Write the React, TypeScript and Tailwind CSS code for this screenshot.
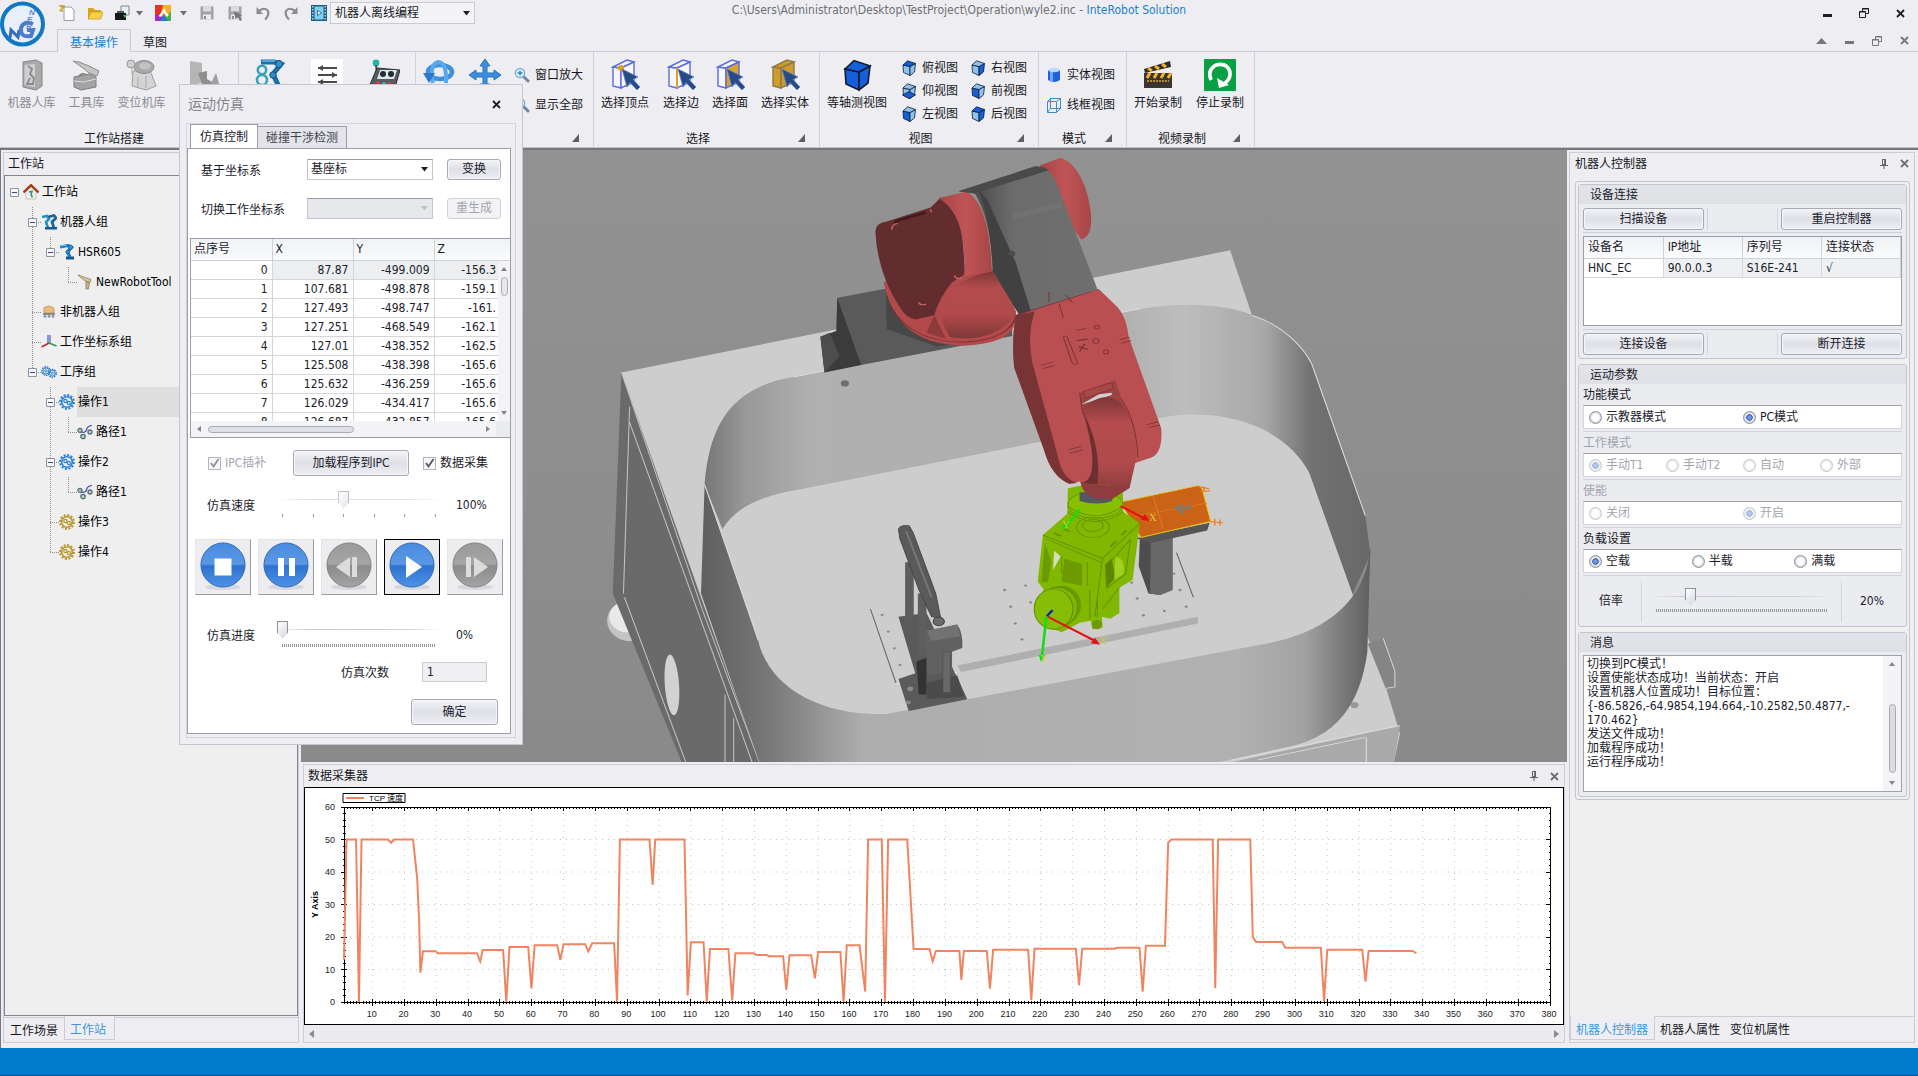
//--------------------------------------------------------------------//
// Imports

//modules
import type { ReactNode } from 'react';
import clsx from 'clsx';

//--------------------------------------------------------------------//
// Types

type TreeNode = {
  level: number,
  label: string,
  icon: ReactNode,
  open?: boolean,
  active?: boolean,
  //for each level from 1 on: whether the guide runs on below this row
  guides: boolean[]
};

//--------------------------------------------------------------------//
// Constants

const points = [
  [ '0', '87.87', '-499.009', '-156.3' ],
  [ '1', '107.681', '-498.878', '-159.1' ],
  [ '2', '127.493', '-498.747', '-161.' ],
  [ '3', '127.251', '-468.549', '-162.1' ],
  [ '4', '127.01', '-438.352', '-162.5' ],
  [ '5', '125.508', '-438.398', '-165.6' ],
  [ '6', '125.632', '-436.259', '-165.6' ],
  [ '7', '126.029', '-434.417', '-165.6' ],
  [ '8', '126.687', '-432.857', '-165.6' ]
];

const messages = [
  '切换到PC模式！',
  '设置使能状态成功！当前状态：开启',
  '设置机器人位置成功！目标位置：',
  '{-86.5826,-64.9854,194.664,-10.2582,50.4877,-',
  '170.462}',
  '发送文件成功！',
  '加载程序成功！',
  '运行程序成功！'
].join('\n');

//TCP speed samples
const samples = [
  [1,13],[1.8,50],[4.8,50],[5.7,0],[6.5,50],[14.8,50],[15.8,49],[16.8,50],
  [22.7,50],[24,38],[24.6,25],[25,9],[25.8,15.6],[29.8,15.6],[30.5,15],
  [42.8,15],[43.8,12.5],[44.6,16],[51,16],[52,0],[53,16.9],[58.9,16.9],
  [59.9,4.2],[60.9,17.5],[68,17.5],[69,13],[70,17.8],[76.8,17.8],[77.8,15.6],
  [79,18.1],[85.9,18.1],[86.8,0],[87.7,50],[97,50],[98,36],[98.8,50],
  [108,50],[109,2],[110,18.4],[114,18.4],[115,0],[116,16.3],[121.8,16.3],
  [123,0.5],[124,15],[129.8,15],[130.5,14.5],[133.8,14.5],[134.5,14.1],
  [139,14.1],[140,3.7],[141,14.4],[147.8,14.4],[149,7.3],[150,15.4],
  [157,15.4],[158,0],[159,17.5],[163,17.5],[164.8,3.2],[165.7,50],[170,50],
  [171,0],[172,50],[178,50],[180,16.3],[185,16.3],[186,12.5],[187,15.7],
  [194.4,15.7],[195,6.8],[195.8,15.7],[203,15.7],[204,4.1],[205,16.1],
  [216,16.1],[217,0.6],[218,16.4],[231,16.4],[232,5.2],[233,16.4],
  [243,16.4],[244,16.7],[251,16.7],[252,3.2],[253,17.3],[259,17.3],[260,49],
  [261,50],[274,50],[274.8,4.2],[275.7,50],[285.8,50],[286.6,20],
  [287.6,18.5],[295.8,18.5],[296.8,16.7],[308,16.7],[309,0.2],[310,16.1],
  [321,16.1],[322,6.3],[323,15.7],[336.8,15.7],[338,15]
];

const buttonStyle = 'border border-[#a6a9b4] rounded-[3px] bg-linear-to-b '
  + 'from-[#f3f4f7] via-[#dfe0e7] to-[#eeeff3] text-[#1b1b2b] '
  + 'shadow-[inset_0_0_0_1px_#f6f6fa]';

const trackStyle = 'block w-full h-5 appearance-none bg-transparent '
  + 'bg-[linear-gradient(90deg,transparent,#c9c4d8_20%,#cfd1d8_80%,transparent)] '
  + 'bg-[length:100%_1px] bg-[position:0_9px] bg-no-repeat '
  + '[&::-webkit-slider-thumb]:appearance-none '
  + '[&::-webkit-slider-thumb]:w-[11px] [&::-webkit-slider-thumb]:h-[18px] '
  + '[&::-webkit-slider-thumb]:bg-[linear-gradient(135deg,#ffffff,#d4d6dd)] '
  + '[&::-webkit-slider-thumb]:border [&::-webkit-slider-thumb]:border-[#8f929c] '
  + '[&::-webkit-slider-thumb]:[clip-path:polygon(0_0,100%_0,100%_68%,50%_100%,0_68%)]';

//--------------------------------------------------------------------//
// Icons

function Arm() {
  return (
    <svg width="16" height="16" viewBox="0 0 16 16">
      <path d="M1 3 L9 1.5 L12.5 3.5 L8.5 8 L11 13" fill="none" stroke="#1f7bc2" strokeWidth="3.2" />
      <path d="M1 2 L8 1" stroke="#8fd0f5" strokeWidth="0.8" />
      <path d="M7 12.5 h8 v3 h-8z" fill="#17598f" />
      <circle cx="11.5" cy="3.2" r="2.2" fill="#2b93d8" stroke="#114a78" strokeWidth="0.6" />
      <circle cx="8.8" cy="8" r="1.9" fill="#2b93d8" stroke="#114a78" strokeWidth="0.6" />
    </svg>
  );
};

function ArmPair() {
  return (
    <svg width="16" height="16" viewBox="0 0 16 16">
      <path d="M1 3 L6 2 L8 5 L5 8 L7 14" fill="none" stroke="#2b8fc9" strokeWidth="2.6" />
      <path d="M7 3 L13 1.5 L15 4 L11 8 L13 14" fill="none" stroke="#1b649c" strokeWidth="2.8" />
      <path d="M4 13 h12 v2.5 h-12z" fill="#17598f" />
    </svg>
  );
};

function Gear({ color = '#2a7fd6' }) {
  return (
    <svg width="16" height="16" viewBox="0 0 16 16" fill="none">
      <circle cx="8" cy="8" r="6.9" stroke={color} strokeWidth="2" strokeDasharray="2.1 1.51" />
      <circle cx="8" cy="8" r="5.3" stroke={color} strokeWidth="1.6" />
      <circle cx="6.4" cy="7" r="1.6" stroke={color} strokeWidth="1.2" />
      <circle cx="9.8" cy="9" r="1.6" stroke={color} strokeWidth="1.2" />
    </svg>
  );
};

function Gears() {
  return (
    <svg width="16" height="16" viewBox="0 0 16 16" fill="none" stroke="#2f83cf">
      <circle cx="5" cy="7" r="4.2" strokeWidth="1.4" strokeDasharray="1.7 0.8" />
      <circle cx="5" cy="7" r="3.1" />
      <circle cx="5" cy="7" r="1.2" />
      <circle cx="11.3" cy="9.3" r="3.9" strokeWidth="1.4" strokeDasharray="1.7 0.8" />
      <circle cx="11.3" cy="9.3" r="2.8" />
      <circle cx="11.3" cy="9.3" r="1" />
    </svg>
  );
};

function House() {
  return (
    <svg width="16" height="16" viewBox="0 0 16 16">
      <path d="M3 8 v7 h10 v-7 l-5 -5z" fill="#f3efe6" stroke="#b7aa90" strokeWidth="0.6" />
      <path d="M0.5 8.5 L8 1.2 L15.5 8.5" fill="none" stroke="#a63c1e" strokeWidth="2.4" />
      <path d="M6 8 l3 -0.6 l-1 3 l1.4 3" fill="none" stroke="#2f8f9d" strokeWidth="1.6" />
    </svg>
  );
};

function ToolGun() {
  return (
    <svg width="16" height="16" viewBox="0 0 16 16">
      <path d="M1 1 L14 5.5 L13 8.5 L8 7z" fill="#d9c49b" stroke="#86714a" strokeWidth="0.7" />
      <path d="M9 7.5 L12.5 8.5 L11.5 15 L9 15z" fill="#c8b184" stroke="#86714a" strokeWidth="0.7" />
    </svg>
  );
};

function Crate() {
  return (
    <svg width="16" height="16" viewBox="0 0 16 16">
      <path d="M3 9 V3.5 L8 2 L13 4 V9z" fill="#e9bd7a" stroke="#b98b45" strokeWidth="0.7" />
      <path d="M2 10 h12" stroke="#6f7782" strokeWidth="1.6" />
      <circle cx="4" cy="12.4" r="1.4" fill="#8b95a3" />
      <circle cx="8" cy="12.4" r="1.4" fill="#8b95a3" />
      <circle cx="12" cy="12.4" r="1.4" fill="#8b95a3" />
    </svg>
  );
};

function Axes() {
  return (
    <svg width="16" height="16" viewBox="0 0 16 16" fill="none" strokeWidth="1.7">
      <path d="M7 1 V9 M9 1 V9" stroke="#4658cf" strokeWidth="1.2" />
      <path d="M8 9 L0.5 13" stroke="#c92a2a" />
      <path d="M8 9 L15.5 12" stroke="#2f9e44" />
    </svg>
  );
};

function Route() {
  return (
    <svg width="16" height="16" viewBox="0 0 16 16" fill="none">
      <path d="M15 1.5 Q10 2 9.5 6 Q8 10 3 7" stroke="#3b46b0" strokeWidth="1.2" />
      <g stroke="#56707c" strokeWidth="1.3" fill="#b9d3bf">
        <circle cx="3" cy="6.5" r="2" />
        <circle cx="6" cy="12.5" r="2.2" />
        <circle cx="13" cy="8" r="2" />
      </g>
    </svg>
  );
};

/**
 * Open box with a pointer. The fill says what a click selects
 */
function PickBox({ mode }: { mode: 'point' | 'edge' | 'face' | 'solid' }) {
  const solid = mode === 'solid';
  return (
    <svg width="32" height="32" viewBox="0 0 32 32">
      <g fill={solid ? '#d19b2b' : '#f7f7fd'} stroke={solid ? '#8f7a4a' : '#5a6be0'} strokeWidth="1.4">
        <path d="M4 8 L12 9 V29 L4 27z" />
        <path d="M4 8 L18 1 L25 3 L12 9z" />
        <path d="M12 9 L25 3 V23 L12 29z" fill={mode === 'face' ? '#d9a32f' : undefined} />
      </g>
      {mode === 'edge' && <path d="M12 9 V29" stroke="#e0a020" strokeWidth="2" />}
      {mode === 'point' && <circle cx="12" cy="9" r="3" fill="#e0a020" />}
      <path
        d="M13 10 L29 18 L24 20.5 L31 28 L28 31 L21 23.5 L18 28z"
        fill="#274a86"
        stroke="#5f84bf"
        strokeWidth="0.8"
      />
    </svg>
  );
};

/**
 * View cube. The face that is looked at is dark
 */
function Cube({ face = '', size = 16 }) {
  const dark = '#1560d8';
  const light = size > 16 ? dark : '#8fc4ea';
  const left = face === 'front' || face === 'left';
  const right = face === 'right' || face === 'back';
  const top = face === 'top' || face === 'back';
  return (
    <svg width={size} height={size} viewBox="0 0 16 16" stroke="#0d1b33" strokeWidth="0.8">
      <path d="M2 5 L9 6.5 V15.5 L2.5 12.5z" fill={left ? dark : light} />
      <path d="M9 6.5 L14.5 3.5 L13.5 12 L9 15.5z" fill={right ? dark : light} />
      <path d="M2 5 L6.5 0.8 L14.5 3.5 L9 6.5z" fill={top ? dark : light} />
      {face === 'bottom' && <path d="M1.5 12 L8 8.5 L14.5 12 L8 15.5z" fill={dark} />}
    </svg>
  );
};

function Magnifier() {
  return (
    <svg width="16" height="16" viewBox="0 0 16 16" fill="none">
      <path d="M9.5 9.5 L14 14" stroke="#6f8aa0" strokeWidth="3" strokeLinecap="round" />
      <circle cx="6" cy="6" r="4.6" fill="#e4f4fd" stroke="#7bb3d4" strokeWidth="1.5" />
      <path d="M6 3.5 V8.5 M3.5 6 H8.5" stroke="#2583c7" strokeWidth="1.4" />
    </svg>
  );
};

function Floppy({ pointer = false }) {
  return (
    <svg width="16" height="16" viewBox="0 0 16 16">
      <path d="M1.5 1.5 h13 v13 h-13z" fill="#a3a3a6" />
      <path d="M4 1.5 h8 v5 h-8z" fill="#dcdcdf" />
      <path d="M4 9.5 h8 v5 h-8z" fill="#ececef" />
      <path d="M5 11 h2 v3 h-2z" fill="#8a8a8d" />
      {pointer && <path d="M7 6 L15 10.5 L12.5 11.5 L15 15 L13 16 L11 12.5 L8.5 14z" fill="#77777b" />}
    </svg>
  );
};

function Turn({ flip = false }) {
  return (
    <svg width="16" height="16" viewBox="0 0 16 16" className={clsx(flip && '-scale-x-100')}>
      <path d="M4 6 Q10 1.5 13 6 Q14.5 10 10 14.5" fill="none" stroke="#8b8b90" strokeWidth="2.2" />
      <path d="M1.5 2 V9 H8z" fill="#8b8b90" />
    </svg>
  );
};

function Caret({ className = 'fill-[#1e1e1e]' }) {
  return (
    <svg width="7" height="5" viewBox="0 0 7 5" className={className}>
      <path d="M0 0 h7 l-3.5 4.5z" />
    </svg>
  );
};

function Close({ className = 'stroke-[#1e1e1e]' }) {
  return (
    <svg width="9" height="9" viewBox="0 0 9 9" className={className}>
      <path d="M1 1 L8 8 M8 1 L1 8" strokeWidth="1.8" />
    </svg>
  );
};

function Restore() {
  return (
    <svg width="10" height="10" viewBox="0 0 10 10" fill="none" stroke="currentColor">
      <path d="M0.5 3.5 h6 v6 h-6z M0 4 h7" />
      <path d="M3.5 3 V0.5 h6 v5 H7 M3 1 h7" />
    </svg>
  );
};

function Pin() {
  return (
    <svg width="8" height="10" viewBox="0 0 8 10" fill="none" stroke="#5e5e66">
      <path d="M2.5 0.5 h3 v5 h-3z M0 6.5 h8 M4 6 v4" />
      <path d="M5 0.5 v5" strokeWidth="1.6" />
    </svg>
  );
};

function Logo() {
  return (
    <svg width="46" height="48" viewBox="0 0 46 48" className="absolute left-0 top-0">
      <circle cx="22.5" cy="24" r="20.5" fill="#e9effa" stroke="#1079c4" strokeWidth="4" />
      <path d="M10 38 L11 30 L18 37 L19 30" fill="none" stroke="#3567bd" strokeWidth="3" />
      <path d="M33 24 Q24 20 21 28 Q20 38 31 36 L33 30 H27" fill="none" stroke="#4c7ccd" strokeWidth="4" />
      <g fill="#5b84cc" fontFamily="Liberation Sans, sans-serif" fontWeight="bold" fontStyle="italic" fontSize="8">
        <text x="29" y="15">N</text>
        <text x="27" y="22">E</text>
        <text x="26" y="29">R</text>
      </g>
    </svg>
  );
};

//--------------------------------------------------------------------//
// Header Components

function BigButton(props: {
  icon: ReactNode,
  width: string,
  label?: string,
  title?: string,
  muted?: boolean
}) {
  const { icon, width, label, title, muted } = props;
  return (
    <button
      type="button"
      aria-label={label || title}
      className={clsx(
        'flex flex-col items-center pt-[7px] whitespace-nowrap',
        width,
        muted ? 'text-[#8b8b92]' : 'text-[#16161c]'
      )}
    >
      <span className="h-8">{icon}</span>
      {label && <span className="mt-1 leading-4">{label}</span>}
    </button>
  );
};

function SmallButton({ icon, label }: { icon: ReactNode, label: string }) {
  return (
    <button type="button" className="flex items-center gap-[5px] whitespace-nowrap text-[#16161c]">
      {icon}
      {label}
    </button>
  );
};

function RibbonGroup(props: {
  width: string,
  label?: string,
  launcher?: boolean,
  children: ReactNode
}) {
  const { width, label, launcher, children } = props;
  return (
    <section className={clsx('flex flex-col shrink-0 border-r border-[#d0d1dc]', width)}>
      <div className="flex flex-1">{children}</div>
      <div className="flex items-center h-[18px] pl-1 pr-[14px]">
        <span className="flex-1 pt-0.5 text-center text-[#16161c]">{label}</span>
        {launcher && (
          <svg width="7" height="8" viewBox="0 0 7 8" className="fill-[#5e5e64]">
            <path d="M7 0 V8 H0z" />
          </svg>
        )}
      </div>
    </section>
  );
};

function TitleBar() {
  return (
    <header className="relative">
      <Logo />
      <div className="grid grid-cols-[1fr_auto_1fr] h-[26px] items-center">
        <div className="flex items-center gap-3 pl-[59px]">
          <button type="button" aria-label="新建">
            <svg width="16" height="16" viewBox="0 0 16 16">
              <path d="M5 2 h7 l3 3 v10.5 h-10z" fill="#fdfdff" stroke="#9a9aa8" />
              <path d="M0 1 h6 M3 0 v7 M0.5 6 L6 1" stroke="#c6a524" strokeWidth="1.5" />
            </svg>
          </button>
          <button type="button" aria-label="打开">
            <svg width="16" height="16" viewBox="0 0 16 16">
              <path d="M1 14 V3 h5 l2 2 h6 v9z" fill="#d9a31c" />
              <path d="M1 14 L4 7 H16 L13.5 14z" fill="#f8d14c" stroke="#c99516" strokeWidth="0.7" />
            </svg>
          </button>
          <button type="button" aria-label="导入" className="flex w-7 items-center justify-between">
            <svg width="16" height="16" viewBox="0 0 16 16">
              <path d="M6 1 h8 v9 h-8z" fill="#e6eef5" stroke="#7b8792" />
              <path d="M0 8 h11 v7 h-11z" fill="#17191c" />
              <path d="M2 6 h7 v2 h-7z" fill="#4d545b" />
              <path d="M8 10 l4 0 l-2 3z" fill="#46b33f" />
            </svg>
            <Caret className="fill-[#6e6e74]" />
          </button>
          <button type="button" aria-label="颜色" className="flex w-8 items-center justify-between">
            <svg width="16" height="16" viewBox="0 0 16 16">
              <path d="M0 0 h16 v16 h-16z" fill="#f6b12a" />
              <path d="M0 0 h8 L4 16 H0z" fill="#e8322c" />
              <path d="M16 6 V16 H9z" fill="#3bb54a" />
              <path d="M0 9 L8 12 L6 16 H0z" fill="#a628c9" />
              <path d="M5 16 L9 9 L13 16z" fill="#2276e0" />
              <path d="M4.5 11.5 L10 4 M8 5 L13 11" fill="none" stroke="#fff" strokeWidth="2" />
            </svg>
            <Caret className="fill-[#6e6e74]" />
          </button>
          <button type="button" aria-label="保存"><Floppy /></button>
          <button type="button" aria-label="另存为"><Floppy pointer /></button>
          <button type="button" aria-label="撤销"><Turn /></button>
          <button type="button" aria-label="重做"><Turn flip /></button>
          <div className="flex items-center gap-[3px]">
            <svg width="16" height="16" viewBox="0 0 16 16">
              <path d="M0 0 h16 v16 h-16z" fill="#1c5d86" />
              <path d="M3.5 1.5 h9 v13 h-9z" fill="#7fd0f0" />
              <path d="M1.8 1 V16 M14.2 1 V16" stroke="#d8eef8" strokeWidth="1.2" strokeDasharray="1.5 1.5" />
              <path d="M6.5 5.5 l4 2.5 l-4 2.5z" fill="#fff" stroke="#1c5d86" strokeWidth="0.8" />
            </svg>
            <div className="relative">
              <select
                aria-label="模块"
                className={
                  'appearance-none w-[145px] h-[22px] pl-1 border border-[#c9cad4] '
                  + 'bg-[#f4f4f7] text-[#16161c]'
                }
              >
                <option>机器人离线编程</option>
              </select>
              <span className="absolute right-[5px] top-[9px] pointer-events-none"><Caret /></span>
            </div>
          </div>
        </div>
        <h1 className="self-start pt-0.5 leading-4 text-[#6f6f75]">
          C:\Users\Administrator\Desktop\TestProject\Operation\wyle2.inc
          {' - '}
          <span className="text-[#1d7fc7]">InteRobot Solution</span>
        </h1>
        <div className="flex items-center justify-end pr-[13px] gap-[27px] text-[#1e1e1e]">
          <button type="button" aria-label="最小化" className="w-[9px] h-[3px] bg-[#1e1e1e] mt-1"></button>
          <button type="button" aria-label="还原"><Restore /></button>
          <button type="button" aria-label="关闭"><Close /></button>
        </div>
      </div>
      <div className="flex h-[26px] border-b border-[#c9cad6] pl-[57px]">
        <a
          href="#basic"
          className={
            'mt-[3px] h-[23px] w-[74px] pt-[3px] text-center leading-5 border '
            + 'border-b-0 border-[#c9cad6] bg-[#eeeef2] text-[#1d7fc7]'
          }
        >
          基本操作
        </a>
        <a href="#sketch" className="mt-[3px] pt-1 px-3 leading-5 text-[#16161c]">草图</a>
        <div className="flex-1"></div>
        <div className="flex items-center gap-[18px] pr-[9px] pt-1 text-[#76767c]">
          <button type="button" aria-label="收起">
            <svg width="11" height="6" viewBox="0 0 11 6" className="fill-[#76767c]">
              <path d="M0 6 L5.5 0 L11 6z" />
            </svg>
          </button>
          <button type="button" aria-label="最小化窗口" className="w-[9px] h-[3px] bg-[#76767c] mt-1"></button>
          <button type="button" aria-label="还原窗口"><Restore /></button>
          <button type="button" aria-label="关闭窗口"><Close className="stroke-[#76767c]" /></button>
        </div>
      </div>
    </header>
  );
};

function Ribbon() {
  return (
    <nav className="flex h-24 border-b border-[#c3c4cc]">
      <RibbonGroup width="w-[239px]" label="工作站搭建">
        <div className="flex pl-1">
          <BigButton muted width="w-[55px]" label="机器人库" icon={(
            <svg width="32" height="32" viewBox="0 0 32 32">
              <path d="M7 3 L20 1 L26 4 V27 L20 31 L7 28z" fill="#a9a9a9" stroke="#858585" />
              <path d="M8.5 6 L19 5 V28 L8.5 26z" fill="#cfcfcf" />
              <path d="M12 7 l4 3 l-2 5 l4 4 l-1 6 h-6 l3 -6" fill="none" stroke="#8a8a8a" strokeWidth="1.8" />
            </svg>
          )} />
          <BigButton muted width="w-[55px]" label="工具库" icon={(
            <svg width="32" height="32" viewBox="0 0 32 32">
              <path d="M2 2 L8 3 L18 7 L28 12 L26 17 L18 14 L12 9z" fill="#c4c4c4" stroke="#8d8d8d" />
              <path d="M3 18 L18 15 L25 18 V28 L10 31 L3 28z" fill="#a3a3a3" stroke="#7e7e7e" />
              <path d="M3 22 L12 23 L25 20" fill="none" stroke="#ddd" />
              <path d="M8 17 q3 -4 7 -1" fill="none" stroke="#7e7e7e" strokeWidth="1.5" />
            </svg>
          )} />
          <BigButton muted width="w-[55px]" label="变位机库" icon={(
            <svg width="32" height="32" viewBox="0 0 32 32">
              <path d="M7 12 L24 11 L30 27 L20 31 L6 27z" fill="#d4d4d4" stroke="#a0a0a0" />
              <ellipse cx="18" cy="8" rx="10" ry="6.5" fill="#a9a9a9" stroke="#8c8c8c" />
              <ellipse cx="19" cy="7" rx="6" ry="3.4" fill="#c2c2c2" />
              <circle cx="5" cy="5" r="4" fill="#cfcfcf" stroke="#999" />
              <path d="M12 18 v10 M20 17 v12 M6 8 v8" stroke="#aaa" />
            </svg>
          )} />
          <BigButton muted width="w-[70px]" title="移动" icon={(
            <svg width="32" height="32" viewBox="0 0 32 32">
              <path d="M2 2 L14 4 V24 L2 26z" fill="#b5b5b5" />
              <path d="M10 14 L19 12 V20 L29 26 L14 25z" fill="#8f8f8f" />
              <path d="M22 26 L28 14 L32 28z" fill="#9f9f9f" />
            </svg>
          )} />
        </div>
      </RibbonGroup>
      <RibbonGroup width="w-[177px]">
        <div className="flex pl-0.5">
          <BigButton width="w-[57px]" title="机器人" icon={(
            <svg width="32" height="32" viewBox="0 0 32 32">
              <g fill="none" stroke="#3aa3b8" strokeWidth="2.6">
                <circle cx="8" cy="11" r="4.2" />
                <circle cx="8" cy="21" r="5" />
              </g>
              <path d="M7 3 L20 3 L27 5 L19 15 L26 30" fill="none" stroke="#1d6fa8" strokeWidth="5" />
              <circle cx="25" cy="5" r="3.6" fill="#2d8fd0" stroke="#134f7c" />
              <circle cx="19" cy="16" r="3.2" fill="#2d8fd0" stroke="#134f7c" />
              <path d="M8 2 H21" stroke="#63b7e8" strokeWidth="1.5" />
            </svg>
          )} />
          <BigButton width="w-[57px]" title="参数" icon={(
            <svg width="32" height="32" viewBox="0 0 32 32">
              <path d="M0 0 h32 v32 h-32z" fill="#fff" />
              <path d="M7 9 H26 M7 16 H26 M7 23 H26" stroke="#4a4a4a" strokeWidth="2" />
              <path d="M12 6 l-5 3 l5 3z M21 13 l5 3 l-5 3z M12 20 l-5 3 l5 3z" fill="#4a4a4a" />
            </svg>
          )} />
          <BigButton width="w-[57px]" title="示教器" icon={(
            <svg width="32" height="32" viewBox="0 0 32 32">
              <circle cx="8" cy="4" r="3.4" fill="#26b3a6" />
              <path d="M8 6 L9 20" stroke="#444" strokeWidth="1.6" />
              <path d="M9 9 L32 11 L26 32 L1 28z" fill="#575c61" stroke="#2b2e31" />
              <path d="M12 11 h17 l-3 9 h-17z" fill="#dfe5e8" />
              <circle cx="15" cy="15" r="3" fill="#1e3036" />
              <circle cx="23" cy="15" r="3" fill="#1e3036" />
              <circle cx="10" cy="24" r="1.9" fill="#d83c3c" />
              <circle cx="16" cy="25" r="1.9" fill="#36b3d8" />
              <circle cx="21" cy="25" r="1.9" fill="#d83c3c" />
            </svg>
          )} />
        </div>
      </RibbonGroup>
      <RibbonGroup width="w-[178px]" launcher>
        <BigButton width="w-[46px]" title="旋转" icon={(
          <svg width="32" height="32" viewBox="0 0 32 32">
            <ellipse cx="17" cy="13" rx="12" ry="7" fill="none" stroke="#3f8fdc" strokeWidth="4.5" />
            <path d="M10 24 Q6 6 15 3 Q24 3 23 24" fill="none" stroke="#5aa8ec" strokeWidth="4" />
            <path d="M0 14 L12 14 L6 24z" fill="#2a78c9" />
          </svg>
        )} />
        <BigButton width="w-[46px]" title="平移" icon={(
          <svg width="32" height="32" viewBox="0 0 32 32">
            <path
              d="M16 0 L21 7 H18 V14 H25 V11 L32 16 L25 21 V18 H18 V25 H21 L16 32 L11 25 H14 V18 H7 V21 L0 16 L7 11 V14 H14 V7 H11z"
              fill="#3a8edb"
              stroke="#2a72b8"
            />
          </svg>
        )} />
        <div className="grid grid-rows-[30px_30px] ml-[6px] pt-2">
          <SmallButton icon={<Magnifier />} label="窗口放大" />
          <SmallButton icon={<Magnifier />} label="显示全部" />
        </div>
      </RibbonGroup>
      <RibbonGroup width="w-[226px]" label="选择" launcher>
        <BigButton width="w-[62px]" label="选择顶点" icon={<PickBox mode="point" />} />
        <BigButton width="w-[50px]" label="选择边" icon={<PickBox mode="edge" />} />
        <BigButton width="w-[48px]" label="选择面" icon={<PickBox mode="face" />} />
        <BigButton width="w-[62px]" label="选择实体" icon={<PickBox mode="solid" />} />
      </RibbonGroup>
      <RibbonGroup width="w-[219px]" label="视图" launcher>
        <BigButton width="w-[74px]" label="等轴测视图" icon={<Cube size={32} />} />
        <div className="grid grid-cols-[69px_60px] grid-rows-[23px_23px_23px] ml-[7px] pt-1">
          <SmallButton icon={<Cube face="top" />} label="俯视图" />
          <SmallButton icon={<Cube face="right" />} label="右视图" />
          <SmallButton icon={<Cube face="bottom" />} label="仰视图" />
          <SmallButton icon={<Cube face="front" />} label="前视图" />
          <SmallButton icon={<Cube face="left" />} label="左视图" />
          <SmallButton icon={<Cube face="back" />} label="后视图" />
        </div>
      </RibbonGroup>
      <RibbonGroup width="w-[88px]" label="模式" launcher>
        <div className="grid grid-rows-[30px_30px] pl-[7px] pt-2">
          <SmallButton label="实体视图" icon={(
            <svg width="16" height="16" viewBox="0 0 16 16">
              <path d="M2 3 V13 Q8 17 14 13 V3z" fill="#1f5fe0" />
              <path d="M4 4 V14 L7 15 V4z" fill="#6fa8ff" />
              <ellipse cx="8" cy="3" rx="6" ry="2.2" fill="#bcd9ff" />
            </svg>
          )} />
          <SmallButton label="线框视图" icon={(
            <svg width="16" height="16" viewBox="0 0 16 16" fill="none" stroke="#3f8ac9">
              <path d="M1.5 4.5 h9 v11 h-9z M4.5 1.5 h10 v10 h-10z M1.5 4.5 l3 -3 M10.5 4.5 l4 -3 M10.5 15.5 l4 -4 M1.5 15.5 l3 -4" />
            </svg>
          )} />
        </div>
      </RibbonGroup>
      <RibbonGroup width="w-[128px]" label="视频录制" launcher>
        <BigButton width="w-[62px]" label="开始录制" icon={(
          <svg width="32" height="32" viewBox="0 0 32 32">
            <path d="M2 10 L28 2 L29 8 L3 14z" fill="#2c2c2c" />
            <path d="M6 9 l4 3 M13 7 l4 3 M20 5 l4 3" stroke="#f0b429" strokeWidth="3" />
            <path d="M2 14 H30 V29 H2z" fill="#3a3530" />
            <path d="M5 19 l3 -5 M12 19 l3 -5 M19 19 l3 -5 M26 19 l3 -5" stroke="#f0b429" strokeWidth="3" />
            <path d="M5 22 H27" stroke="#b98a3a" strokeWidth="2" strokeDasharray="2 1" />
          </svg>
        )} />
        <BigButton width="w-[62px]" label="停止录制" icon={(
          <svg width="32" height="32" viewBox="0 0 32 32">
            <path d="M0 0 h32 v32 h-32z" fill="#08a045" />
            <path d="M7 21 Q3 11 12 6 Q23 3 26 13 Q27 20 20 25" fill="none" stroke="#fff" strokeWidth="3.6" />
            <path d="M13 19 L15 29 L25 26z" fill="#fff" />
          </svg>
        )} />
      </RibbonGroup>
    </nav>
  );
};

//--------------------------------------------------------------------//
// Tree Components

const tree: TreeNode[] = [
  { level: 0, label: '工作站', icon: <House />, open: true, guides: [] },
  { level: 1, label: '机器人组', icon: <ArmPair />, open: true, guides: [ true ] },
  { level: 2, label: 'HSR605', icon: <Arm />, open: true, guides: [ true, false ] },
  { level: 3, label: 'NewRobotTool', icon: <ToolGun />, guides: [ true, false, false ] },
  { level: 1, label: '非机器人组', icon: <Crate />, guides: [ true ] },
  { level: 1, label: '工作坐标系组', icon: <Axes />, guides: [ true ] },
  { level: 1, label: '工序组', icon: <Gears />, open: true, guides: [ false ] },
  { level: 2, label: '操作1', icon: <Gear />, open: true, active: true, guides: [ false, true ] },
  { level: 3, label: '路径1', icon: <Route />, guides: [ false, true, false ] },
  { level: 2, label: '操作2', icon: <Gear />, open: true, guides: [ false, true ] },
  { level: 3, label: '路径1', icon: <Route />, guides: [ false, true, false ] },
  { level: 2, label: '操作3', icon: <Gear color="#b8952a" />, guides: [ false, true ] },
  { level: 2, label: '操作4', icon: <Gear color="#b8952a" />, guides: [ false, false ] }
];

/**
 * One 18px step of indentation with its dotted guide lines
 */
function Guide({ own, below, open }: { own: boolean, below: boolean, open?: boolean }) {
  return (
    <svg width="18" height="30" viewBox="0 0 18 30" fill="none" className="shrink-0">
      <g stroke="#8d8d8d" strokeDasharray="1 1">
        {(own || below) && <path d={below ? 'M9.5 0 V30' : 'M9.5 0 V15'} />}
        {own && <path d="M9 15.5 H18" />}
      </g>
      {open && (
        <>
          <path d="M5.5 11.5 h8 v8 h-8z" fill="#f6f7fa" stroke="#8c93a3" />
          <path d="M7 15.5 h5" stroke="#3a4a78" />
        </>
      )}
    </svg>
  );
};

function Tree() {
  return (
    <ul className="flex-1 min-h-0 overflow-hidden border border-[#85858d] bg-[#efeff0] pt-px text-black">
      {tree.map((node, i) => (
        <li key={i} className="flex h-[30px] items-center">
          {node.level === 0 ? <Guide own={false} below={false} open /> : (
            <>
              <span className="w-[18px]"></span>
              {node.guides.map((below, level) => (
                <Guide
                  key={level}
                  own={level === node.level - 1}
                  below={below}
                  open={node.open && level === node.level - 1}
                />
              ))}
            </>
          )}
          <span className="w-[18px] shrink-0">{node.icon}</span>
          <span className={clsx(
            'flex-1 h-full pl-px leading-[30px] whitespace-nowrap',
            node.active && 'bg-[#dfdfdf]'
          )}>
            {node.label}
          </span>
        </li>
      ))}
    </ul>
  );
};

function LeftPanel() {
  return (
    <aside className="flex w-[301px] shrink-0 border-l border-[#77777d] pl-0.5 pr-0.5 pt-0.5 pb-[5px]">
      <div className="flex flex-col flex-1 border border-[#cbccd8]">
        <h2 className="h-[22px] pl-1 leading-[22px] text-[#16161c]">工作站</h2>
        <Tree />
        <div className="flex h-[26px] text-[#16161c]">
          <a href="#scene" className="w-[60px] mt-px border-t border-[#cbccd8] pl-[6px] leading-[26px]">工作场景</a>
          <a
            href="#station"
            className="w-[51px] h-6 border border-t-0 border-[#cbccd8] pl-[5px] leading-[28px] text-[#3d97dc]"
          >
            工作站
          </a>
          <div className="flex-1 mt-px border-t border-[#cbccd8]"></div>
        </div>
      </div>
    </aside>
  );
};

//--------------------------------------------------------------------//
// Viewport Components

/**
 * Robot cell. Drawn on its own grid, then scaled into the view
 */
function Scene() {
  return (
    <svg
      viewBox="0 0 1266 612"
      preserveAspectRatio="xMidYMid slice"
      className="block absolute inset-0 w-full h-full"
    >
      <defs>
        <linearGradient id="back" x1="0" y1="0" x2="0" y2="1">
          <stop offset="0" stopColor="#929292" />
          <stop offset="1" stopColor="#8a8a8a" />
        </linearGradient>
        <linearGradient id="inner" gradientUnits="userSpaceOnUse" x1="205" y1="0" x2="1510" y2="0">
          <stop offset="0" stopColor="#777" />
          <stop offset="0.06" stopColor="#989898" />
          <stop offset="0.16" stopColor="#b0b0b0" />
          <stop offset="0.62" stopColor="#afafaf" />
          <stop offset="0.72" stopColor="#bdbdbd" />
          <stop offset="0.84" stopColor="#a8a8a8" />
          <stop offset="0.91" stopColor="#727272" />
          <stop offset="1" stopColor="#686868" />
        </linearGradient>
        <linearGradient id="outer" gradientUnits="userSpaceOnUse" x1="198" y1="0" x2="1510" y2="0">
          <stop offset="0" stopColor="#5f5f5f" />
          <stop offset="0.1" stopColor="#777" />
          <stop offset="0.24" stopColor="#adadad" />
          <stop offset="0.8" stopColor="#b1b1b1" />
          <stop offset="0.9" stopColor="#a2a2a2" />
          <stop offset="1" stopColor="#5f5f5f" />
        </linearGradient>
        <linearGradient id="upper" x1="0" y1="0" x2="1" y2="0">
          <stop offset="0" stopColor="#3f3f3f" />
          <stop offset="0.4" stopColor="#6c6c6c" />
          <stop offset="1" stopColor="#6f6f6f" />
        </linearGradient>
        <linearGradient id="red" x1="0" y1="0" x2="1" y2="0">
          <stop offset="0" stopColor="#a94546" />
          <stop offset="0.5" stopColor="#bf5455" />
          <stop offset="1" stopColor="#a84647" />
        </linearGradient>
        <linearGradient id="wrist" x1="0" y1="0" x2="0" y2="1">
          <stop offset="0" stopColor="#7d3637" />
          <stop offset="0.25" stopColor="#b44c4d" />
          <stop offset="0.65" stopColor="#b04a4b" />
          <stop offset="1" stopColor="#7f3738" />
        </linearGradient>
      </defs>
      <path d="M0 0 H1266 V612 H0z" fill="url(#back)" />
      <g transform="translate(299 0) scale(0.5102 0.389)">
        <ellipse cx="58" cy="1210" rx="44" ry="52" fill="#c4c4c4" />
        <ellipse cx="54" cy="1200" rx="36" ry="40" fill="#e9e9e9" />
        {/* table */}
        <path d="M42 572 L1235 258 L1278 425 L1540 1380 L1568 1500 L1556 1573 H300z" fill="#cdcdcd" />
        <path d="M42 572 L25 1140 L160 1573 H312z" fill="#6a6a6a" />
        <path d="M42 572 L200 1180 L312 1573 M58 700 L298 1573 M48 1150 L168 1573 M245 1400 V1573 M262 1460 V1573 M58 660 L46 1140" fill="none" stroke="#c4c4c4" strokeWidth="2" />
        <ellipse cx="141" cy="1375" rx="14" ry="78" fill="#d2d2d2" transform="rotate(-3 141 1375)" />
        <path d="M1535 1255 L1558 1340 V1380 L1540 1384 L1505 1270z" fill="#858585" />
        <path d="M1535 1255 L1558 1340 V1380 L1540 1384" fill="none" stroke="#d8d8d8" strokeWidth="2" />
        <path d="M1568 1480 L1240 1573 H1556z" fill="#a9a9a9" />
        <path d="M1568 1480 L1240 1568 M1500 1510 L1290 1568 M1502 1510 V1573" fill="none" stroke="#e0e0e0" strokeWidth="2" />
        <circle cx="1479" cy="1427" r="8" fill="#999" />
        {/* inside of the guard */}
        <path
          d="M205 860 C215 700 260 610 380 583 L1060 408 C1220 375 1340 420 1395 550 L1500 940 L1510 1040 L1475 1142 L1390 830 C1350 730 1250 665 1120 684 L400 871 C330 885 270 910 240 975z"
          fill="url(#inner)"
        />
        <path d="M380 583 L1060 408 M1278 425 C1340 450 1380 510 1395 550 L1500 940" fill="none" stroke="#e2e2e2" strokeWidth="2" />
        {/* floor */}
        <path
          d="M240 975 C270 910 330 885 400 871 L1120 684 C1250 665 1350 730 1390 830 L1475 1142 C1430 1215 1380 1250 1310 1268 L720 1412 L560 1450 C430 1455 330 1380 310 1260z"
          fill="#cdcdcd"
        />
        <path d="M700 1325 L1172 1200 V1217 L708 1342z" fill="#afafaf" />
        <path d="M530 1180 L580 1370 M1130 1035 L1163 1150" fill="none" stroke="#5e5e5e" strokeWidth="2" />
        <path d="M582 1372 L700 1342" fill="none" stroke="#efefef" strokeWidth="2" />
        <g fill="#8a8a8a">
          {[
            [793,1131],[834,1120],[805,1174],[844,1163],[814,1217],[827,1258],[1042,1112],
            [1053,1153],[1125,1089],[1137,1131],[1065,1196],[1106,1185],[1149,1174],
            [553,1195],[565,1238],[577,1281],[588,1324]
          ].map(([ x, y ]) => <circle key={x + '-' + y} cx={x} cy={y} r="3" />)}
        </g>
        {/* front of the guard */}
        <path
          d="M205 860 L310 1260 C330 1380 430 1455 560 1450 L720 1412 L1310 1268 C1400 1245 1500 1180 1510 1020 L1504 1290 C1490 1430 1440 1510 1350 1534 L1215 1573 H312 L198 1140z"
          fill="url(#outer)"
        />
        <path d="M205 860 L310 1260" stroke="#dedede" strokeWidth="2" />
        <circle cx="480" cy="600" r="8" fill="#6f6f6f" />
        {/* base */}
        <path d="M465 380 L560 357 L660 420 L808 455 V478 L512 553 L465 470z" fill="#5a5a5a" />
        <path d="M465 380 L512 553 L440 572 L432 480 L463 465z" fill="#3b3b3b" />
        <path d="M432 480 L450 470 L470 530 L440 572z" fill="#4d4d4d" />
        <path d="M560 357 L562 460 L660 505 L780 485z" fill="#474747" />
        <path d="M556 340 C570 430 610 503 715 503 C790 498 820 470 815 415 L790 310 L640 300z" fill="#b24a4b" />
        <path d="M568 400 C600 470 650 495 715 494 C780 490 810 460 815 425" fill="none" stroke="#6e2d2e" strokeWidth="2" />
        <path d="M670 440 C670 370 700 330 770 312 L815 415 C800 465 745 495 685 480z" fill="url(#wrist)" />
        <path d="M655 425 L678 485 L640 470z" fill="#8d3a3b" />
        {/* shoulder */}
        <path d="M862 40 L903 20 C935 35 955 90 962 160 C965 205 958 225 943 230 L900 150z" fill="url(#red)" />
        <path d="M540 215 Q538 188 562 184 L648 148 L668 122 Q700 130 710 220 L716 318 L690 340 Q665 380 655 425 L618 436 Q600 432 588 405 Q545 320 540 215z" fill="#632c2e" />
        <path d="M578 188 q4 -8 20 -12 l40 -15" fill="none" stroke="#3e1b1c" strokeWidth="6" />
        <path d="M572 205 q0 -15 12 -16 M650 160 l-3 -8 M695 322 q0 10 14 8 M625 392 q2 8 14 5" fill="none" stroke="#c66" strokeWidth="3" />
        <path d="M664 124 L718 107 C750 130 765 200 768 310 L714 324 C716 230 708 160 664 124z" fill="url(#red)" />
        {/* upper arm */}
        <path d="M703 106 L853 42 Q880 45 892 75 L975 358 L905 392 L822 424 L770 312 Q766 180 735 112z" fill="url(#upper)" />
        <path d="M703 106 L853 42 Q870 42 880 52 L750 105 L735 112z" fill="#4a4a4a" />
        <path d="M742 102 Q765 180 770 312 L822 424 L845 416 L815 290 L760 130z" fill="#414141" />
        <path d="M808 172 L905 140" stroke="#7a7a7a" strokeWidth="14" opacity="0.4" />
        <circle cx="807" cy="266" r="7" fill="#4b4b4b" />
        {/* forearm */}
        <path
          d="M815 425 L978 358 L1015 405 Q1032 430 1036 480 L1100 715 Q1104 785 1075 793 L1046 806 L1038 868 L1003 898 L958 888 L940 852 L920 858 Q885 840 870 770 L812 560 Q806 490 815 425z"
          fill="#b94f50"
        />
        <path d="M815 425 L852 415 Q836 480 848 550 L896 780 Q905 845 936 856 L920 858 Q885 840 870 770 L812 560 Q806 490 815 425z" fill="#783435" />
        <path d="M940 624 L1010 592 L1022 640 L1030 670 L945 680z" fill="#9b4243" />
        <path d="M942 655 L978 640 L1003 630 L1003 624 L978 628z" fill="#cfcfcf" />
        <path d="M948 620 L1003 598 L1006 612 L952 638z" fill="#a94849" stroke="#5e2829" />
        <path d="M945 668 C975 625 1010 625 1030 665 C1050 710 1052 760 1050 800 L1038 868 L1003 898 L972 892 C985 800 970 730 945 668z" fill="url(#wrist)" />
        <path d="M945 668 C970 730 985 800 972 892 L958 888 L945 855 C972 850 972 780 945 668z" fill="#6e2f30" />
        <path d="M940 624 L945 668 M1022 640 Q1052 700 1054 790" fill="none" stroke="#7b3536" strokeWidth="2" />
        <g fill="none" stroke="#7b3334" strokeWidth="2">
          <path d="M815 425 L978 358 M908 480 q8 -5 10 8 l18 60 q-8 8 -12 -6z M900 395 l8 36 M880 365 v26 M912 372 l14 20" />
          <path d="M934 490 l22 -4 M938 505 l18 8 M940 518 l10 -20" strokeWidth="3" />
          <path d="M934 463 l18 -4" />
          <circle cx="974" cy="455" r="5" />
          <circle cx="972" cy="491" r="6" />
          <circle cx="992" cy="519" r="5" />
          <path d="M865 553 l24 -8 M867 562 l24 -8 M918 770 l26 -8 M921 779 l26 -8 M1018 488 l20 -7 M1021 497 l20 -7 M1072 706 l22 -7 M1075 714 l22 -7" />
        </g>
        {/* workpiece stand */}
        <path d="M1058 1000 L1122 985 V1130 L1098 1144 L1075 1140 L1056 1070z" fill="#4d4d4d" />
        <path d="M1080 998 L1122 985 V1132 L1098 1144 L1078 1140z" fill="#686868" />
        <path d="M1050 998 L1195 958 L1190 978 L1080 1010z" fill="#555" />
        <path d="M1020 905 L1172 863 Q1180 865 1182 880 L1197 955 L1060 996z" fill="#cb6316" stroke="#e8c514" strokeWidth="2" />
        <path d="M1084 890 L1104 975 M1060 938 L1190 908" stroke="#e07a28" strokeWidth="2" />
        <path d="M1122 920 l14 -9 12 6 10 -8 v14 l-12 2 -4 14 -8 -12z" fill="#8b7762" />
        <path d="M1172 865 l22 6 M1176 878 l20 -2 M1184 866 v12 M1195 955 l26 4 M1205 948 v18 M1215 950 v16" stroke="#f07818" strokeWidth="2.5" />
        {/* gripper */}
        <path d="M917 870 Q970 850 1025 870 V930 L1058 960 L1044 1105 L1018 1125 V1190 L1000 1205 L984 1200 L985 1228 L965 1232 L962 1210 L940 1215 L905 1240 Q855 1215 852 1170 L870 1130 L858 1110 L868 990 L916 935z" fill="#80b800" />
        <ellipse cx="971" cy="912" rx="54" ry="34" fill="#86c000" stroke="#6c9a00" strokeWidth="2" />
        <path d="M940 880 h64 v22 q-30 14 -64 0z" fill="#55595f" />
        <path d="M942 855 L1038 868 L1003 898 L970 895 Q945 885 942 855z" fill="#8e3c3d" />
        <g fill="none" stroke="#639000" strokeWidth="2">
          <ellipse cx="966" cy="970" rx="32" ry="26" />
          <ellipse cx="966" cy="965" rx="20" ry="16" />
          <path d="M916 915 q55 50 110 0 M916 930 q55 50 110 0 M868 990 L985 1050 L1058 960 M875 1000 L985 1062 M985 1050 L970 1200 M905 1045 V1090 M955 1060 V1120 M960 1130 V1205 M975 1150 V1200" />
          <path d="M1000 1060 L1040 1000 L1030 1090 L995 1125z M1018 1125 L985 1180" />
          <path d="M890 985 l14 8 M910 975 l10 5 M1000 1020 l12 -14 M1022 990 l10 -12" strokeWidth="4" />
        </g>
        <path d="M890 1030 L903 1045 L888 1080z" fill="#d5dcc0" />
        <path d="M910 1050 L945 1065 V1120 L905 1110z M885 1060 L878 1110 L865 1112 L872 1010z" fill="#6c9a00" />
        <path d="M990 1065 L1003 1050 L1010 1100 L992 1125z" fill="#5c8500" />
        <path d="M1010 1045 Q1030 1050 1026 1090 L1008 1105z" fill="#a0d020" />
        <ellipse cx="905" cy="1170" rx="38" ry="50" fill="#6c9a00" />
        <ellipse cx="898" cy="1175" rx="38" ry="51" fill="#80b800" stroke="#5f8a00" strokeWidth="2" />
        <ellipse cx="889" cy="1180" rx="38" ry="52" fill="#86be05" stroke="#5f8a00" strokeWidth="2" />
        <ellipse cx="974" cy="1220" rx="10" ry="12" fill="#6c9a00" />
        {/* fixture on the left */}
        <path d="M585 1200 L640 1190 L720 1412 L605 1442 L585 1360 L618 1345z" fill="#5a5a5a" />
        <path d="M598 1060 h17 v150 h-17z M623 1140 h17 v160 h-17z M672 1290 h15 v108 h-15z" fill="#5e5e5e" />
        <path d="M585 975 Q590 962 606 966 L614 985 L658 1140 L668 1205 L650 1200 L625 1130 L588 1000z" fill="#5a5a5a" stroke="#474747" strokeWidth="2" />
        <path d="M600 980 L650 1150" stroke="#777" strokeWidth="4" />
        <path d="M638 1240 L700 1220 Q712 1240 710 1280 L690 1290 V1340 L640 1350z" fill="#616161" />
        <path d="M640 1235 L700 1220 L706 1250 L650 1262z" fill="#727272" />
        <path d="M620 1315 L640 1305 L640 1400 L625 1400z" fill="#333" />
        <path d="M640 1370 L700 1350 L715 1405 L640 1412z" fill="#4b4b4b" />
        <path d="M672 1290 h15 v105 h-15z" fill="#686868" stroke="#444" />
        <circle cx="664" cy="1212" r="11" fill="#6b6b6b" stroke="#3b3b3b" strokeWidth="2" />
        <circle cx="608" cy="1385" r="6" fill="#888" />
        <circle cx="604" cy="1420" r="5" fill="#888" />
        {/* axes */}
        <g strokeWidth="5">
          <path d="M875 1198 L975 1265 M1020 915 L1068 948" stroke="#e81010" />
          <path d="M875 1198 L866 1305 M940 925 L912 970" stroke="#0fe010" />
          <path d="M876 1198 L887 1183" stroke="#1020c0" />
        </g>
        <path d="M980 1272 L962 1268 L970 1254z M1078 955 L1060 950 L1068 936z" fill="#e81010" />
        <path d="M864 1316 L860 1298 H872z M905 977 L908 960 L918 968z" fill="#0fe010" />
      </g>
      <g fill="#d8c832" fontFamily="Liberation Serif, serif" fontSize="11">
        <text x="798" y="494">X</text>
        <text x="848" y="371">X</text>
        <text x="739" y="512">Y</text>
        <text x="761" y="378">Y</text>
      </g>
    </svg>
  );
};

/**
 * TCP speed over the sample number
 */
function Chart() {
  //plot area, in view box units
  const left = 39;
  const top = 19;
  const right = 1245;
  const bottom = 214;
  const x = (value: number) => left + (value - 1) * (right - left) / 379;
  const y = (value: number) => bottom - value * (bottom - top) / 60;
  const tens = Array.from({ length: 38 }, (_, i) => (i + 1) * 10);
  const units = Array.from({ length: 380 }, (_, i) => i + 1);
  const rows = [ 0, 10, 20, 30, 40, 50, 60 ];
  const minor = Array.from({ length: 31 }, (_, i) => i * 2);
  return (
    <svg viewBox="0 0 1258 236" className="block w-full h-full" fontFamily="Liberation Sans, Noto Sans CJK SC, sans-serif">
      <g stroke="#c4c4c4" strokeDasharray="1 5" fill="none">
        {tens.slice(0, -1).map(n => <path key={n} d={`M${x(n)} ${top} V${bottom}`} />)}
        {rows.slice(1, -1).map(n => <path key={n} d={`M${left} ${y(n)} H${right}`} />)}
      </g>
      <g stroke="#000" fill="none" shapeRendering="crispEdges">
        <path d={units.map(n => `M${x(n)} ${bottom - 1} v3 M${x(n)} ${top} v2`).join(' ')} />
        <path d={tens.map(n => `M${x(n)} ${bottom - 3} v7 M${x(n)} ${top} v4`).join(' ')} />
        <path d={minor.map(n => `M${left - 1} ${y(n)} h3 M${right - 1} ${y(n)} h2`).join(' ')} />
        <path d={rows.map(n => `M${left - 3} ${y(n)} h6 M${right - 4} ${y(n)} h4`).join(' ')} />
        <path d={`M${left} ${top} H${right} V${bottom} H${left}z`} />
      </g>
      <path
        d={'M' + samples.map(([ a, b ]) => `${x(a)} ${y(b)}`).join(' L')}
        fill="none"
        stroke="#ef8560"
        strokeWidth="2"
      />
      <g fontSize="9" fill="#222">
        {tens.map(n => <text key={n} x={x(n) - 1} y="229" textAnchor="middle">{n}</text>)}
        {rows.map(n => <text key={n} x="30" y={y(n) + 3} textAnchor="end">{n}</text>)}
      </g>
      <text fontSize="9" fontWeight="bold" transform="translate(13 130) rotate(-90)">Y Axis</text>
      <path d="M38 5.5 h62 v9 h-62z" fill="#fff" stroke="#000" />
      <path d="M41 10 h18" stroke="#ef8560" strokeWidth="2" />
      <text x="64" y="13" fontSize="8">TCP 速度</text>
    </svg>
  );
};

function DataPanel() {
  return (
    <section className="flex flex-col h-[279px] mt-0.5 mb-[5px] mx-0.5 border border-[#cbccd8]">
      <div className="flex h-[22px] items-center pl-1 pr-[5px] text-[#16161c]">
        <h2 className="flex-1">数据采集器</h2>
        <button type="button" aria-label="固定"><Pin /></button>
        <button type="button" aria-label="关闭" className="ml-3"><Close className="stroke-[#6e6e76]" /></button>
      </div>
      <div className="flex-1 min-h-0 border border-black bg-white"><Chart /></div>
      <div className="flex h-[17px] items-center justify-between px-[5px] bg-[#ececee]">
        <svg width="5" height="8" viewBox="0 0 5 8" className="fill-[#8a8a90]"><path d="M5 0 V8 L0 4z" /></svg>
        <svg width="5" height="8" viewBox="0 0 5 8" className="fill-[#8a8a90]"><path d="M0 0 V8 L5 4z" /></svg>
      </div>
    </section>
  );
};

//--------------------------------------------------------------------//
// Form Components

function Radio(props: {
  name: string,
  label: string,
  checked?: boolean,
  disabled?: boolean
}) {
  const { name, label, checked, disabled } = props;
  return (
    <label className={clsx(
      'flex flex-1 items-center gap-1 whitespace-nowrap',
      disabled ? 'text-[#a3a5ae]' : 'text-[#1b1b2b]'
    )}>
      <input
        type="radio"
        name={name}
        defaultChecked={checked}
        disabled={disabled}
        className={
          'appearance-none w-[13px] h-[13px] rounded-full border border-[#8e919c] '
          + 'bg-[radial-gradient(circle,#ffffff_40%,#c9ccd6_75%)] '
          + 'checked:bg-[radial-gradient(circle,#6f96e0_20%,#3a5fae_38%,#e9ecf4_45%,#c5c9d6_80%)] '
          + 'disabled:opacity-50'
        }
      />
      {label}
    </label>
  );
};

function RadioBox({ title, children, muted }: { title: string, children: ReactNode, muted?: boolean }) {
  return (
    <fieldset>
      <legend className={clsx('h-[21px] leading-[23px]', muted ? 'text-[#a3a5ae]' : 'text-[#1b1b2b]')}>
        {title}
      </legend>
      <div className="flex h-6 items-center pl-[5px] pr-1 border border-t-[#a0a1ab] border-[#d3d4dc] bg-white">
        {children}
      </div>
      <div className="mt-0.5 h-px bg-[#d0d1da]"></div>
    </fieldset>
  );
};

function Check({ label, disabled }: { label: string, disabled?: boolean }) {
  return (
    <label className={clsx('flex items-center gap-1 whitespace-nowrap', disabled ? 'text-[#a3a5ae]' : 'text-[#1b1b2b]')}>
      <span className="relative flex">
        <input
          type="checkbox"
          defaultChecked
          disabled={disabled}
          className="appearance-none w-[13px] h-[13px] border border-[#b3b5be] bg-[#f7f7f9]"
        />
        <svg
          width="13"
          height="13"
          viewBox="0 0 13 13"
          className="absolute left-0 top-0 pointer-events-none"
          fill="none"
          stroke={disabled ? '#8e8e94' : '#55555e'}
          strokeWidth="1.8"
        >
          <path d="M3 6 L5.5 9.5 L10.5 2" />
        </svg>
      </span>
      {label}
    </label>
  );
};

function Combo({ id, value, disabled }: { id: string, value: string, disabled?: boolean }) {
  return (
    <div className="relative w-[126px]">
      <select
        id={id}
        disabled={disabled}
        className={
          'block appearance-none w-full h-[21px] pl-[3px] border border-[#c3c4cd] '
          + 'border-t-[#9b9ca6] bg-white text-[#1b1b2b] disabled:bg-[#e7e8eb]'
        }
      >
        <option>{value}</option>
      </select>
      <span className="absolute right-[5px] top-2 pointer-events-none">
        <Caret className={disabled ? 'fill-[#c0c1c8]' : 'fill-[#1e1e1e]'} />
      </span>
    </div>
  );
};

function Ticks() {
  return (
    <div className="mx-[5px] h-[3px] bg-[repeating-linear-gradient(90deg,#96969e_0_1px,transparent_1px_2px)]"></div>
  );
};

//--------------------------------------------------------------------//
// Dialog Components

const disc = 'M28 4 a22 22 0 1 0 0.01 0z';

function MediaButton(props: {
  label: string,
  glyph: string,
  muted?: boolean,
  focused?: boolean
}) {
  const { label, glyph, muted, focused } = props;
  return (
    <button
      type="button"
      aria-label={label}
      disabled={muted}
      className={clsx(
        'flex w-14 h-14 items-center justify-center bg-[#ededf0] border',
        focused ? 'border-black' : 'border-[#e4e4e8] border-r-[#9c9ca4] border-b-[#9c9ca4]'
      )}
    >
      <svg width="54" height="54" viewBox="1 1 54 54">
        <defs>
          <linearGradient id="disc-blue" x1="0" y1="0" x2="0" y2="1">
            <stop offset="0" stopColor="#4a8be0" />
            <stop offset="0.48" stopColor="#5b97e4" />
            <stop offset="0.52" stopColor="#2d72cf" />
            <stop offset="1" stopColor="#4f92e6" />
          </linearGradient>
          <linearGradient id="disc-gray" x1="0" y1="0" x2="0" y2="1">
            <stop offset="0" stopColor="#9a9a9a" />
            <stop offset="0.48" stopColor="#a5a5a5" />
            <stop offset="0.52" stopColor="#8b8b8b" />
            <stop offset="1" stopColor="#a4a4a4" />
          </linearGradient>
        </defs>
        <ellipse cx="28" cy="48" rx="18" ry="3" fill="#d6d8de" />
        <path
          d={disc}
          fill={muted ? 'url(#disc-gray)' : 'url(#disc-blue)'}
          stroke={muted ? '#858585' : '#2f6cb8'}
        />
        <path d={glyph} fill={muted ? '#dcdcdc' : '#fff'} />
      </svg>
    </button>
  );
};

function Dialog() {
  return (
    <div
      role="dialog"
      aria-label="运动仿真"
      className={
        'absolute left-[179px] top-[84px] w-[344px] pb-[6px] px-[6px] border '
        + 'border-[#c5c6d2] bg-[#eeeef2]'
      }
    >
      <div className="flex h-[38px] items-center pl-0.5 pr-[15px]">
        <h2 className="flex-1 text-[14px] text-[#85858c]">运动仿真</h2>
        <button type="button" aria-label="关闭"><Close /></button>
      </div>
      <div className="border border-[#d3d4de] pr-1 pb-[3px]">
        <div className="flex items-end pl-[3px] h-6">
          <button
            type="button"
            className="w-[68px] h-6 pt-px border border-b-0 border-[#9c9da8] bg-white text-[#1b1b2b]"
          >
            仿真控制
          </button>
          <button
            type="button"
            className="w-[89px] h-[22px] border border-l-0 border-b-0 border-[#9c9da8] bg-[#e3e4ea] text-[#43434f]"
          >
            碰撞干涉检测
          </button>
        </div>
        <div className="border border-[#9c9da8] bg-white pb-2 text-[#1b1b2b]">
          <div className="flex items-center mt-[9px] pl-[13px]">
            <label htmlFor="base" className="w-[106px] pt-1">基于坐标系</label>
            <Combo id="base" value="基座标" />
            <button type="button" className={clsx(buttonStyle, 'ml-[14px] w-[54px] h-[21px]')}>变换</button>
          </div>
          <div className="flex items-center mt-[17px] pl-[13px]">
            <label htmlFor="work" className="w-[106px] pt-1">切换工作坐标系</label>
            <Combo id="work" value="" disabled />
            <button
              type="button"
              disabled
              className="ml-[14px] w-[54px] h-[21px] border border-[#cfd0d7] rounded-[3px] bg-[#f3f3f6] text-[#a3a5ae]"
            >
              重生成
            </button>
          </div>
          <div className="relative mt-[19px] ml-0.5 border border-r-0 border-[#9c9da8]">
            <div className="h-[182px] overflow-hidden">
              <table className="w-full table-fixed border-collapse">
                <thead>
                  <tr className="h-[21px] bg-linear-to-b from-[#f1f2f5] to-[#fafbfc] text-left">
                    <th className="w-[81px] pl-[3px] font-normal border-r border-b border-[#cfd1d6]">点序号</th>
                    <th className="w-[81px] pl-[3px] font-normal border-r border-b border-[#cfd1d6]">X</th>
                    <th className="w-[81px] pl-[3px] font-normal border-r border-b border-[#cfd1d6]">Y</th>
                    <th className="pl-[3px] font-normal border-b border-[#cfd1d6]">Z</th>
                  </tr>
                </thead>
                <tbody>
                  {points.map((row, i) => (
                    <tr key={row[0]} className="h-[19px] text-right leading-[18px]">
                      <td className="pr-1 border-r border-b border-[#d5d6da]">{row[0]}</td>
                      <td className={clsx('pr-1 border-r border-b border-[#d5d6da]', i === 0 && 'bg-[#eceef0]')}>{row[1]}</td>
                      <td className={clsx('pr-1 border-r border-b border-[#d5d6da]', i === 0 && 'bg-[#eceef0]')}>{row[2]}</td>
                      <td className={clsx('pr-[14px] border-b border-[#d5d6da]', i === 0 && 'bg-[#eceef0]')}>{row[3]}</td>
                    </tr>
                  ))}
                </tbody>
              </table>
            </div>
            <div className="absolute right-0 top-[22px] h-[160px] w-[12px] flex flex-col items-center bg-[#f4f4f6] py-[6px]">
              <svg width="6" height="4" viewBox="0 0 6 4" className="fill-[#85858c]"><path d="M0 4 h6 L3 0z" /></svg>
              <div className="mt-[6px] w-[7px] h-[19px] rounded-full border border-[#a9abb5] bg-[#e6e7ea]"></div>
              <div className="flex-1"></div>
              <svg width="6" height="4" viewBox="0 0 6 4" className="fill-[#85858c]"><path d="M0 0 h6 L3 4z" /></svg>
            </div>
            <div className="flex h-4 items-center pl-[6px] bg-[#f4f4f6]">
              <svg width="4" height="6" viewBox="0 0 4 6" className="fill-[#85858c]"><path d="M4 0 V6 L0 3z" /></svg>
              <div className="ml-[7px] w-[146px] h-[7px] rounded-full border border-[#a9abb5] bg-[#dfe0e5]"></div>
              <div className="flex-1"></div>
              <svg width="4" height="6" viewBox="0 0 4 6" className="fill-[#85858c]"><path d="M0 0 V6 L4 3z" /></svg>
              <div className="ml-[6px] h-4 w-[14px] bg-[#ebecee]"></div>
            </div>
          </div>
          <div className="flex items-center mt-3 pl-5">
            <div className="w-[85px]"><Check label="IPC插补" disabled /></div>
            <button type="button" className={clsx(buttonStyle, 'w-[116px] h-[26px] mr-[14px]')}>加载程序到IPC</button>
            <Check label="数据采集" />
          </div>
          <div className="flex h-[30px] items-center mt-3 pl-[19px]">
            <label htmlFor="speed" className="w-[70px] pt-[6px]">仿真速度</label>
            <div className="w-[164px]">
              <input id="speed" type="range" min="0" max="5" defaultValue="2" className={clsx(trackStyle, 'opacity-60')} />
              <div className="flex justify-between mx-[5px] mt-1 h-[3px]">
                <i className="w-px bg-[#96969e]"></i>
                <i className="w-px bg-[#96969e]"></i>
                <i className="w-px bg-[#96969e]"></i>
                <i className="w-px bg-[#96969e]"></i>
                <i className="w-px bg-[#96969e]"></i>
                <i className="w-px bg-[#96969e]"></i>
              </div>
            </div>
            <output htmlFor="speed" className="ml-[15px] pt-1">100%</output>
          </div>
          <div className="flex gap-[7px] mt-[21px] pl-[7px]">
            <MediaButton label="停止" glyph="M19.5 19.5 h17 v17 h-17z" />
            <MediaButton label="暂停" glyph="M20 19 h6 v18 h-6z M31 19 h6 v18 h-6z" />
            <MediaButton label="后退" muted glyph="M15 28 L29 18 V38z M31 18 h5 v20 h-5z" />
            <MediaButton label="播放" focused glyph="M22 17 L38 28 L22 39z" />
            <MediaButton label="前进" muted glyph="M19 18 h5 v20 h-5z M27 18 L41 28 L27 38z" />
          </div>
          <div className="flex h-[30px] items-center mt-[23px] pl-[19px]">
            <label htmlFor="progress" className="w-[70px] pt-[6px]">仿真进度</label>
            <div className="w-[164px]">
              <input id="progress" type="range" min="0" max="100" defaultValue="0" className={trackStyle} />
              <div className="pt-1"><Ticks /></div>
            </div>
            <output htmlFor="progress" className="ml-[15px] pt-1">0%</output>
          </div>
          <div className="flex items-center mt-[14px] pl-[153px]">
            <label htmlFor="times" className="w-[81px] pt-0.5">仿真次数</label>
            <input
              id="times"
              type="text"
              defaultValue="1"
              className="w-[65px] h-5 pl-1 border border-[#c9cad2] bg-[#f0f0f3]"
            />
          </div>
          <button type="button" className={clsx(buttonStyle, 'block mt-[17px] ml-[223px] w-[87px] h-[26px]')}>确定</button>
        </div>
      </div>
    </div>
  );
};

//--------------------------------------------------------------------//
// Controller Components

function Group({ title, children }: { title: string, children: ReactNode }) {
  return (
    <section className="border border-[#c3c5d0] rounded-[3px] bg-[#ebecf0]">
      <h3 className="h-[19px] pl-[11px] leading-5 bg-linear-to-b from-[#e3e4e8] to-[#dfe0e5] text-[#1b1b2b]">{title}</h3>
      <div className="px-1">{children}</div>
    </section>
  );
};

function ButtonPair({ left, right }: { left: string, right: string }) {
  return (
    <div className="flex justify-between">
      <button type="button" className={clsx(buttonStyle, 'w-[121px] h-[22px]')}>{left}</button>
      <div className="flex-1 mx-[3px] border-x border-[#d3d4dd]"></div>
      <button type="button" className={clsx(buttonStyle, 'w-[121px] h-[22px]')}>{right}</button>
    </div>
  );
};

function RightPanel() {
  return (
    <aside className="flex w-[351px] shrink-0 pl-0.5 pr-[3px] pt-0.5 pb-[5px]">
      <div className="flex flex-col flex-1 border border-[#cbccd8]">
        <div className="flex h-7 items-start pt-0.5 pl-[5px] pr-[5px] text-[#16161c]">
          <h2 className="flex-1 leading-[18px]">机器人控制器</h2>
          <button type="button" aria-label="固定" className="mt-1"><Pin /></button>
          <button type="button" aria-label="关闭" className="ml-3 mt-1"><Close className="stroke-[#6e6e76]" /></button>
        </div>
        <div className="flex-1 min-h-0 bg-[#efefef] pl-[5px] pr-1">
          <div className="flex flex-col gap-[5px] border border-[#c3c5d0] rounded-[3px] p-0.5">
            <Group title="设备连接">
              <div className="pt-1 pb-[3px]">
                <ButtonPair left="扫描设备" right="重启控制器" />
                <div className="mt-0.5 mb-[3px] h-px bg-[#d0d1da]"></div>
                <div className="h-[90px] border border-[#9c9da8] bg-white text-[#1b1b2b]">
                  <table className="w-full table-fixed border-collapse text-left">
                    <thead>
                      <tr className="h-[21px] bg-linear-to-b from-[#f1f2f5] to-[#fafbfc]">
                        {[ '设备名', 'IP地址', '序列号', '连接状态' ].map(name => (
                          <th key={name} className="pl-1 font-normal border-r border-b border-[#cfd1d6]">{name}</th>
                        ))}
                      </tr>
                    </thead>
                    <tbody>
                      <tr className="h-[19px] leading-[18px] bg-[#eef0f2]">
                        <td className="pl-1 bg-white border-r border-b border-[#d5d6da]">HNC_EC</td>
                        <td className="pl-1 border-r border-b border-[#d5d6da]">90.0.0.3</td>
                        <td className="pl-1 border-r border-b border-[#d5d6da]">S16E-241</td>
                        <td className="pl-1 border-r border-b border-[#d5d6da]">√</td>
                      </tr>
                    </tbody>
                  </table>
                </div>
                <div className="my-[3px] h-px bg-[#d0d1da]"></div>
                <ButtonPair left="连接设备" right="断开连接" />
              </div>
            </Group>
            <Group title="运动参数">
              <RadioBox title="功能模式">
                <Radio name="mode" label="示教器模式" />
                <Radio name="mode" label="PC模式" checked />
              </RadioBox>
              <RadioBox title="工作模式" muted>
                <Radio name="work-mode" label="手动T1" checked disabled />
                <Radio name="work-mode" label="手动T2" disabled />
                <Radio name="work-mode" label="自动" disabled />
                <Radio name="work-mode" label="外部" disabled />
              </RadioBox>
              <RadioBox title="使能" muted>
                <Radio name="enable" label="关闭" disabled />
                <Radio name="enable" label="开启" checked disabled />
              </RadioBox>
              <RadioBox title="负载设置">
                <Radio name="load" label="空载" checked />
                <Radio name="load" label="半载" />
                <Radio name="load" label="满载" />
              </RadioBox>
              <div className="flex h-[50px] items-center text-[#1b1b2b]">
                <label htmlFor="rate" className="w-[58px] pl-4">倍率</label>
                <div className="flex-1 px-[9px] pt-[6px] pb-[10px] border-x border-[#d3d4dd]">
                  <input id="rate" type="range" min="0" max="100" defaultValue="20" className={trackStyle} />
                  <div className="pt-0.5"><Ticks /></div>
                </div>
                <output htmlFor="rate" className="w-[60px] pl-[18px]">20%</output>
              </div>
            </Group>
            <Group title="消息">
              <div className="pt-[3px] pb-1">
                <div className="flex h-[137px] border border-[#a0a1ab] bg-white">
                  <textarea
                    readOnly
                    aria-label="消息"
                    defaultValue={messages}
                    className={
                      'flex-1 resize-none overflow-hidden pl-[3px] pt-px leading-[14px] '
                      + 'whitespace-pre text-[#1b1b2b]'
                    }
                  />
                  <div className="flex w-[18px] flex-col items-center bg-[#f4f4f6] py-[6px]">
                    <svg width="6" height="4" viewBox="0 0 6 4" className="fill-[#85858c]"><path d="M0 4 h6 L3 0z" /></svg>
                    <div className="flex-1"></div>
                    <div className="mb-2 w-[7px] h-[69px] rounded-full border border-[#a9abb5] bg-[#dcdde3]"></div>
                    <svg width="6" height="4" viewBox="0 0 6 4" className="fill-[#85858c]"><path d="M0 0 h6 L3 4z" /></svg>
                  </div>
                </div>
              </div>
            </Group>
          </div>
        </div>
        <div className="flex h-[26px] text-[#16161c] leading-[28px] whitespace-nowrap">
          <a
            href="#controller"
            className="w-[85px] h-6 border border-t-0 border-[#cbccd8] pl-[5px] text-[#3d97dc]"
          >
            机器人控制器
          </a>
          <a href="#robot" className="border-t border-[#cbccd8] px-[5px] leading-[26px]">机器人属性</a>
          <a href="#positioner" className="flex-1 border-t border-[#cbccd8] px-[5px] leading-[26px]">变位机属性</a>
        </div>
      </div>
    </aside>
  );
};

//--------------------------------------------------------------------//
// Page

export default function App() {
  return (
    <div
      lang="zh-CN"
      className={
        'relative flex flex-col h-screen overflow-hidden bg-[#eeeef2] text-[12px] '
        + 'font-["DejaVu_Sans_Condensed","Noto_Sans_CJK_SC",sans-serif]'
      }
    >
      <TitleBar />
      <Ribbon />
      <main className="flex flex-1 min-h-0 border-t-2 border-[#77777b]">
        <LeftPanel />
        <div className="flex flex-col flex-1 min-w-0">
          <div className="relative flex-1 min-h-0"><Scene /></div>
          <DataPanel />
        </div>
        <RightPanel />
      </main>
      <footer className="h-7 shrink-0 border-b border-[#0d4f82] bg-[#007acc]"></footer>
      <Dialog />
    </div>
  );
};
